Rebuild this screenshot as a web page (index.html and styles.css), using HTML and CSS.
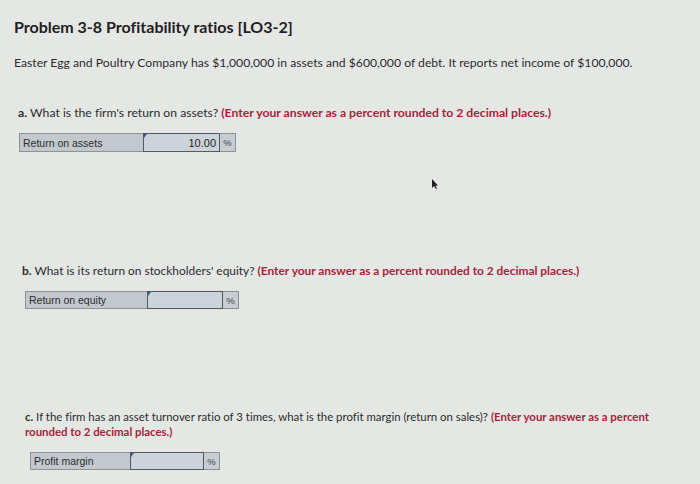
FILE: index.html
```html
<!DOCTYPE html>
<html>
<head>
<meta charset="utf-8">
<link rel="stylesheet" href="styles.css">
</head>
<body>
<div class="page">
  <h1 class="title">Problem 3-8 Profitability ratios [LO3-2]</h1>
  <p class="intro">Easter Egg and Poultry Company has $1,000,000 in assets and $600,000 of debt. It reports net income of $100,000.</p>

  <section class="part part-a">
    <p class="q"><b>a.</b> What is the firm's return on assets? <span class="hint">(Enter your answer as a percent rounded to 2 decimal places.)</span></p>
    <div class="row row-a">
      <div class="label">Return on assets</div>
      <div class="input filled">10.00</div>
      <div class="unit">%</div>
    </div>
    <div class="cursor-zone">
      <svg class="cursor" width="8" height="12" viewBox="0 0 8 12"><path d="M1 1 L1 10 L3 8 L5 11 L6 10.5 L4.5 7.5 L7 7.5 Z" fill="#222"/></svg>
    </div>
  </section>

  <section class="part part-b">
    <p class="q"><b>b.</b> What is its return on stockholders' equity? <span class="hint">(Enter your answer as a percent rounded to 2 decimal places.)</span></p>
    <div class="row row-b">
      <div class="label">Return on equity</div>
      <div class="input"></div>
      <div class="unit">%</div>
    </div>
  </section>

  <section class="part part-c">
    <p class="q"><b>c.</b> If the firm has an asset turnover ratio of 3 times, what is the profit margin (return on sales)? <span class="hint">(Enter your answer as a percent rounded to 2 decimal places.)</span></p>
    <div class="row row-c">
      <div class="label">Profit margin</div>
      <div class="input"></div>
      <div class="unit">%</div>
    </div>
  </section>
</div>
</body>
</html>
```

FILE: styles.css
```css
html, body {
  margin: 0;
  padding: 0;
}
body {
  background: #e5e7e4;
  font-family: Lato, "Liberation Sans", Arial, sans-serif;
  font-variant-ligatures: none;
  color: #2b2c2e;
  width: 700px;
  height: 484px;
  overflow: hidden;
}
.page {
  padding: 17px 0 0 14px;
}
.title {
  margin: 0;
  font-size: 16px;
  line-height: 20px;
  font-weight: 700;
  color: #1f2022;
}
.intro {
  margin: 18px 0 0 0;
  font-size: 12.2px;
  line-height: 15px;
}
.q {
  margin: 0;
  line-height: 15px;
}
.q b {
  font-weight: 700;
}
.hint {
  color: #a8243a;
  font-weight: 700;
}
.part-a {
  margin-top: 35px;
  padding-left: 4px;
}
.part-a .q {
  font-size: 12.2px;
}
.part-b {
  padding-left: 8px;
}
.part-b .q {
  font-size: 11.9px;
}
.part-c {
  margin-top: 100px;
  padding-left: 11px;
  padding-right: 40px;
}
.part-c .q {
  font-size: 11.4px;
  line-height: 15px;
}
.row {
  display: flex;
  height: 19px;
  font-size: 10.5px;
  font-family: "Liberation Sans", Arial, sans-serif;
}
.row-a {
  margin-top: 13px;
  margin-left: 1px;
}
.row-b {
  margin-top: 13px;
  margin-left: 3px;
  height: 18px;
}
.row-c {
  margin-top: 13px;
  margin-left: 5px;
  height: 18px;
}
.label {
  display: flex;
  align-items: center;
  padding-left: 3px;
  background: #c3c8cc;
  border: 1px solid #8c9296;
  border-right: none;
  color: #2a2d30;
}
.row-a .label { width: 120px; }
.row-b .label { width: 118px; }
.row-c .label { width: 96px; }
.input {
  position: relative;
  display: flex;
  align-items: center;
  justify-content: flex-end;
  padding-right: 3px;
  background: #ccd3da;
  border: 1px solid #4f5a63;
  color: #222;
  font-size: 11px;
}
.input::before {
  content: "";
  position: absolute;
  left: 0;
  top: 0;
  width: 0;
  height: 0;
  border-top: 4px solid #2f5f9a;
  border-right: 3px solid transparent;
}
.row-a .input { width: 72px; }
.row-b .input { width: 71px; }
.row-c .input { width: 69px; }
.unit {
  display: flex;
  align-items: center;
  justify-content: center;
  width: 15px;
  background: #c8cdd1;
  border: 1px solid #8c9296;
  border-left: none;
  color: #444;
  font-size: 9.5px;
}
.cursor-zone {
  height: 111px;
  position: relative;
}
.cursor {
  position: absolute;
  left: 413px;
  top: 26px;
}
```
